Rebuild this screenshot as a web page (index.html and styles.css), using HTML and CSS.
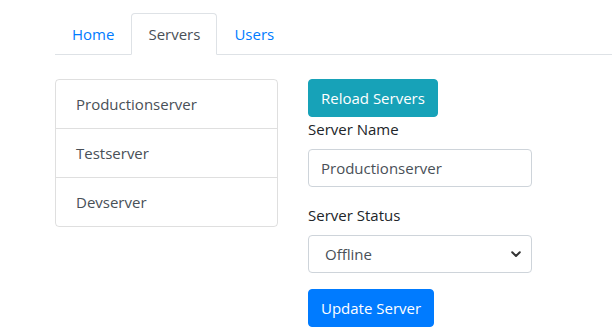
FILE: index.html
```html
<!DOCTYPE html>
<html lang="en">
<head>
    <meta charset="UTF-8">
    <meta name="viewport" content="width=device-width, initial-scale=1.0">
    <title>Servers</title>
    <link rel="stylesheet" href="styles.css">
</head>
<body>
    <div class="page">
        <ul class="nav-tabs">
            <li><a class="nav-link" href="#">Home</a></li>
            <li><a class="nav-link active" href="#">Servers</a></li>
            <li><a class="nav-link" href="#">Users</a></li>
        </ul>

        <div class="content">
            <div class="list-group">
                <a class="list-item" href="#">Productionserver</a>
                <a class="list-item" href="#">Testserver</a>
                <a class="list-item" href="#">Devserver</a>
            </div>

            <div class="edit-panel">
                <button class="btn btn-info">Reload Servers</button>
                <div class="form-group">
                    <label for="serverName">Server Name</label>
                    <input type="text" id="serverName" class="form-control" value="Productionserver">
                </div>
                <div class="form-group">
                    <label for="serverStatus">Server Status</label>
                    <div class="select-wrap">
                        <select id="serverStatus" class="form-control">
                            <option>Online</option>
                            <option selected>Offline</option>
                        </select>
                        <svg class="chevron" width="10" height="7" viewBox="0 0 10 7">
                            <path d="M1.2 1.2 L5 5 L8.8 1.2" fill="none" stroke="#333" stroke-width="2" stroke-linecap="round" stroke-linejoin="round"/>
                        </svg>
                    </div>
                </div>
                <button class="btn btn-primary">Update Server</button>
            </div>
        </div>
    </div>
</body>
</html>
```

FILE: styles.css
```css
body {
    margin: 0;
    font-family: "Open Sans", "Noto Sans", sans-serif;
    font-size: 15px;
    line-height: 24px;
    color: #212529;
    background-color: #fff;
}
.page {
    padding: 13px 0 0 55px;
}
.nav-tabs {
    display: flex;
    list-style: none;
    margin: 0;
    padding: 0;
    border-bottom: 1px solid #dee2e6;
}
.nav-link {
    display: block;
    padding: 8px 16px;
    margin-bottom: -1px;
    border: 1px solid transparent;
    border-radius: 4px 4px 0 0;
    color: #007bff;
    text-decoration: none;
}
.nav-link.active {
    color: #495057;
    background-color: #fff;
    border-color: #dee2e6 #dee2e6 #fff;
}
.content {
    display: grid;
    grid-template-columns: 223px 224px;
    column-gap: 30px;
    align-items: start;
    padding-top: 24px;
}
.list-group {
    display: flex;
    flex-direction: column;
    border: 1px solid rgba(0,0,0,0.125);
    border-radius: 4px;
}
.list-item {
    display: block;
    padding: 12px 20px;
    color: #495057;
    text-decoration: none;
    border-top: 1px solid rgba(0,0,0,0.125);
}
.list-item:first-child {
    border-top: none;
}
.edit-panel {
    display: flex;
    flex-direction: column;
    align-items: flex-start;
}
.btn {
    font-family: inherit;
    font-size: 15px;
    line-height: 24px;
    padding: 6px 12px;
    border: 1px solid transparent;
    border-radius: 4px;
    color: #fff;
    cursor: pointer;
}
.btn-info {
    background-color: #17a2b8;
    border-color: #17a2b8;
}
.btn-primary {
    background-color: #007bff;
    border-color: #007bff;
}
.form-group {
    align-self: stretch;
    margin-bottom: 16px;
}
label {
    display: block;
    margin-bottom: 8px;
}
.form-control {
    display: block;
    box-sizing: border-box;
    width: 100%;
    height: 38px;
    padding: 6px 12px;
    font-family: inherit;
    font-size: 15px;
    line-height: 24px;
    color: #495057;
    background-color: #fff;
    border: 1px solid #ced4da;
    border-radius: 4px;
}
.select-wrap {
    position: relative;
}
select.form-control {
    appearance: none;
    -webkit-appearance: none;
    padding-left: 16px;
}
.chevron {
    position: absolute;
    right: 11px;
    top: 16px;
    pointer-events: none;
}
```
